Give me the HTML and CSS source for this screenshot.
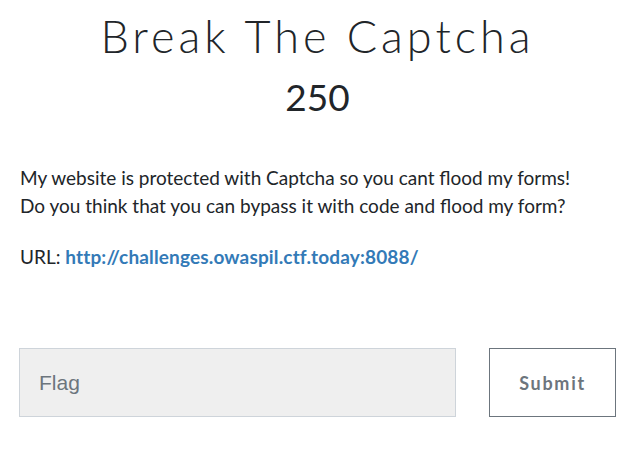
FILE: index.html
```html
<!DOCTYPE html>
<html lang="en">
<head>
    <meta charset="UTF-8">
    <title>Break The Captcha</title>
    <meta name="viewport" content="width=device-width, initial-scale=1.0">
    <link rel="stylesheet" href="styles.css">
</head>
<body>

<div class="challenge">
    <h3 class="challenge-name">Break The Captcha</h3>
    <h4 class="challenge-value">250</h4>

    <div class="challenge-desc">
        <p>My website is protected with Captcha so you cant flood my forms!<br>
        Do you think that you can bypass it with code and flood my form?</p>
        <p>URL: <a href="#">http://challenges.owaspil.ctf.today:8088/</a></p>
    </div>

    <form class="flag-row">
        <input type="text" class="flag-input" placeholder="Flag">
        <button type="button" class="submit-btn">Submit</button>
    </form>
</div>

</body>
</html>
```

FILE: styles.css
```css
body {
    margin: 0;
    background-color: #ffffff;
    font-family: Lato, "Open Sans", sans-serif;
    color: #212529;
}

.challenge {
    padding: 9px 20px 20px 19px;
}

.challenge-name {
    margin: 0;
    text-align: center;
    font-family: Lato, sans-serif;
    font-weight: 300;
    font-size: 45px;
    line-height: 54px;
    letter-spacing: 4px;
}

.challenge-value {
    margin: 12px 0 0 0;
    text-align: center;
    font-family: Lato, sans-serif;
    font-weight: 400;
    font-size: 37px;
    line-height: 44px;
}

.challenge-desc {
    margin-top: 45px;
    font-size: 19px;
    line-height: 28px;
}

.challenge-desc p {
    margin: 0 0 23px 1px;
}

.challenge-desc p:last-child {
    margin-bottom: 0;
}

.challenge-desc a {
    color: #337ab7;
    font-weight: 700;
    letter-spacing: 0.15px;
    text-decoration: none;
}

.flag-row {
    display: flex;
    gap: 33px;
    margin-top: 77px;
}

.flag-input {
    flex: 1;
    height: 69px;
    box-sizing: border-box;
    padding: 0 19px;
    background-color: #efefef;
    border: 1px solid #ced4da;
    font-family: "Liberation Sans", Arial, sans-serif;
    font-size: 21px;
    color: #495057;
}

.flag-input::placeholder {
    color: #6c757d;
}

.submit-btn {
    width: 127px;
    height: 69px;
    background-color: #ffffff;
    border: 1px solid #6c757d;
    font-family: Lato, sans-serif;
    font-weight: 700;
    font-size: 18px;
    letter-spacing: 1.7px;
    color: #6c757d;
}
```
